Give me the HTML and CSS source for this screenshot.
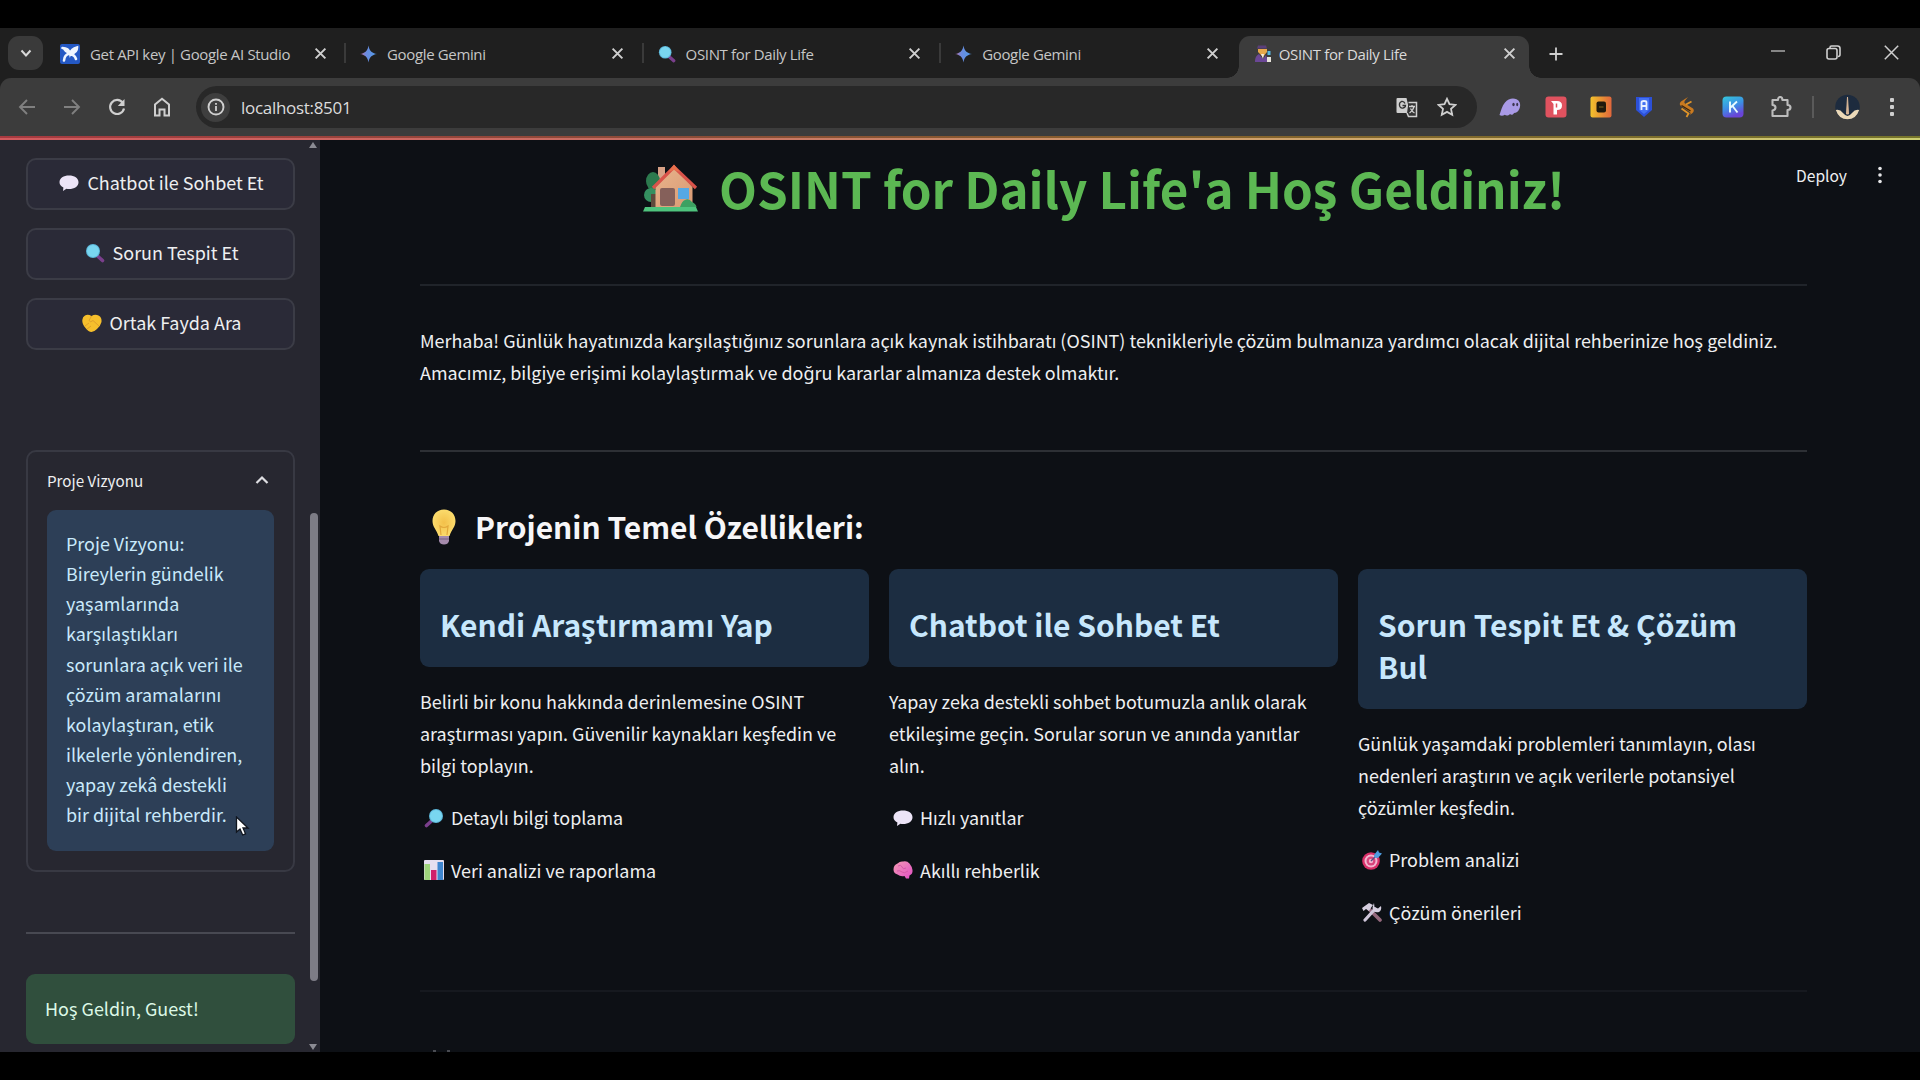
FILE: index.html
```html
<!DOCTYPE html>
<html lang="tr">
<head>
<meta charset="utf-8">
<title>OSINT for Daily Life</title>
<link rel="stylesheet" href="styles.css">
</head>
<body>
<svg width="0" height="0" class="defs">
  <defs>
    <linearGradient id="gem" x1="0" x2="1"><stop offset="0" stop-color="#c06a9a"/><stop offset=".35" stop-color="#6c8be0"/><stop offset="1" stop-color="#4f9be8"/></linearGradient>
    <linearGradient id="kg" x1="0" y1="0" x2=".4" y2="1"><stop offset="0" stop-color="#35c8dc"/><stop offset=".55" stop-color="#3c8fe4"/><stop offset="1" stop-color="#6a44d8"/></linearGradient>
    <linearGradient id="og" x1="0" x2="1"><stop offset="0" stop-color="#f2c22c"/><stop offset="1" stop-color="#e0663c"/></linearGradient>
    <linearGradient id="brain" x1="0" y1="0" x2="1" y2="1"><stop offset="0" stop-color="#f59bb4"/><stop offset="1" stop-color="#e04fc4"/></linearGradient>
    <linearGradient id="wall" x1="0" y1="0" x2="1" y2="1"><stop offset="0" stop-color="#e8b48c"/><stop offset="1" stop-color="#d99a74"/></linearGradient>
    <radialGradient id="bulb"><stop offset="0" stop-color="#f3c04a"/><stop offset="1" stop-color="#fbdb6c"/></radialGradient>
    <symbol id="x" viewBox="0 0 12 12"><path d="M1.5 1.5l9 9m0-9l-9 9" stroke="#cfcfcf" stroke-width="1.8" fill="none"/></symbol>
    <symbol id="gemini" viewBox="0 0 18 18"><path d="M9 0C9.8 5.5 12.5 8.2 18 9 12.5 9.8 9.8 12.5 9 18 8.2 12.500 5.500 9.800 0 9 5.500 8.200 8.200 5.500 9 0Z" fill="url(#gem)"/></symbol>
    <symbol id="mag" viewBox="0 0 20 20"><path d="M12.500 13l5 4.500" stroke="#7a3f8c" stroke-width="3.600" stroke-linecap="round"/><circle cx="8" cy="8" r="7" fill="#5eb9dc"/><circle cx="8" cy="8" r="6" fill="#79d6f0"/></symbol>
    <symbol id="bubble" viewBox="0 0 20 20"><path d="M10 2.500c5.400 0 9.500 2.700 9.500 6.800s-4.100 6.800-9.500 6.800c-.9 0-1.800-.1-2.600-.3L4 18l.4-3.400C2 13.400.5 11.600.5 9.300c0-4.100 4.100-6.800 9.500-6.800z" fill="#ece4f7"/></symbol>
  </defs>
</svg>
<div class="window">
  <div class="tabstrip">
    <div class="tab-menu"><svg width="12" height="12" viewBox="0 0 12 12"><path d="M1.500 3.500L6 8.500l4.500-5" fill="none" stroke="#d8d8d8" stroke-width="2"/></svg></div>
    <div class="tab t1">
      <svg class="fav" width="20" height="20" viewBox="0 0 20 20"><rect width="20" height="20" rx="2" fill="#2458c4"/><path d="M2.500 4q6 0 7.500 5.500Q11.500 5 17 3.500q0 5-6 6.500M9.500 9.500q-5 1-5.500 7M10.500 10.500q4 0 5.500 4.500" fill="none" stroke="#eef4ff" stroke-width="2.600" stroke-linecap="round"/><path d="M2.500 3.500q5 0 7.500 6-6 0-7.500-6zM17 3.500q0 5-7 6 1-5 7-6z" fill="#eef4ff"/></svg>
      <span>Get API key | Google AI Studio</span><svg class="close" width="13" height="13"><use href="#x"/></svg>
    </div>
    <div class="tab"><svg class="fav" width="17" height="18"><use href="#gemini"/></svg><span>Google Gemini</span><svg class="close" width="13" height="13"><use href="#x"/></svg></div>
    <div class="tab"><svg class="fav" width="18" height="18"><use href="#mag"/></svg><span>OSINT for Daily Life</span><svg class="close" width="13" height="13"><use href="#x"/></svg></div>
    <div class="tab last"><svg class="fav" width="17" height="18"><use href="#gemini"/></svg><span>Google Gemini</span><svg class="close" width="13" height="13"><use href="#x"/></svg></div>
    <div class="tab active">
      <svg class="fav" width="18" height="19" viewBox="0 0 18 19"><path d="M4 1.500h8l1 3H3z" fill="#5a3f78"/><path d="M4 5h9v3l-4 5-5-5z" fill="#e8a84a"/><path d="M1 18c0-5 2-7 4-8l4 5 3-4 2 7z" fill="#6b4796"/><path d="M7 10h3l-1 5z" fill="#f4e9e0"/><rect x="13.500" y="7" width="3" height="4" fill="#58b6dd"/><rect x="13" y="13" width="4" height="5" fill="#e8e4dc"/></svg>
      <span>OSINT for Daily Life</span><svg class="close" width="13" height="13"><use href="#x"/></svg>
    </div>
    <svg class="plus" width="14" height="14" viewBox="0 0 14 14"><path d="M7 0.500v13M.5 7h13" stroke="#cfcfcf" stroke-width="1.800"/></svg>
    <div class="winctl">
      <svg width="14" height="14" viewBox="0 0 14 14"><path d="M0 5h14" stroke="#a8a8a8" stroke-width="1.500"/></svg>
      <svg width="15" height="15" viewBox="0 0 15 15"><rect x="1" y="3.500" width="10" height="10.500" rx="2" fill="none" stroke="#cfcfcf" stroke-width="1.600"/><path d="M4 3V2.500Q4 1 5.500 1H11.500Q14 1 14 3.500V9.500Q14 11.500 12 11.500" fill="none" stroke="#cfcfcf" stroke-width="1.600"/></svg>
      <svg width="15" height="15" viewBox="0 0 15 15"><path d="M.8.8l13.400 13.400m0-13.400L.8 14.200" stroke="#cfcfcf" stroke-width="1.500"/></svg>
    </div>
  </div>

  <div class="toolbar">
    <div class="nav">
      <svg width="18" height="18" viewBox="0 0 18 18"><path d="M17 9H2m7-7L2 9l7 7" fill="none" stroke="#808080" stroke-width="1.900"/></svg>
      <svg width="18" height="18" viewBox="0 0 18 18"><path d="M1 9h15M9 2l7 7-7 7" fill="none" stroke="#808080" stroke-width="1.900"/></svg>
      <svg width="18" height="18" viewBox="0 0 18 18"><path d="M14.800 4.800A7 7 0 1 0 16 10.500" fill="none" stroke="#cfcfcf" stroke-width="2.200"/><path d="M16.500 1v7H9.800z" fill="#cfcfcf"/></svg>
      <svg width="18" height="20" viewBox="0 0 18 20"><path d="M2 18.500V7.500L9 1.800l7 5.700v11h-4.500v-6h-5v6z" fill="none" stroke="#cfcfcf" stroke-width="2"/></svg>
    </div>
    <div class="omnibox">
      <div class="info-badge"><svg width="18" height="18" viewBox="0 0 18 18"><circle cx="9" cy="9" r="7.500" fill="none" stroke="#d0d0d0" stroke-width="1.900"/><path d="M9 8v5M9 5v1.800" stroke="#d0d0d0" stroke-width="1.800"/></svg></div>
      <span class="url">localhost:8501</span>
      <svg class="translate" width="22" height="23" viewBox="0 0 22 21"><path d="M1.500 1h9l3.500 15h-12.500q-1 0-1-1V2q0-1 1-1z" fill="#cfcfcf"/><path d="M9 6.500Q8 4 5.500 4.500 3 5.500 3.500 8.500 4 11.500 7 11q2.500-.5 2.500-2.500H6.500" stroke="#333" fill="none" stroke-width="1.300"/><path d="M12.500 5.500h8v14h-8l-1.500-3.500" fill="#333" stroke="#cfcfcf" stroke-width="1.500"/><path d="M13 9.500h6M16 8v1.500m2 0c-.5 3-2.500 5-4.500 6.500m1-4.500c1 2 2 3.500 4 4.500" stroke="#cfcfcf" fill="none" stroke-width="1.300"/></svg>
      <svg width="20" height="20" viewBox="0 0 20 20"><path d="M10 1.800l2.500 5.400 5.900.7-4.400 4 1.200 5.900L10 14.900l-5.200 2.900L6 11.900l-4.400-4 5.900-.7z" fill="none" stroke="#cfcfcf" stroke-width="1.800"/></svg>
    </div>
    <div class="ext">
      <svg width="22" height="20" viewBox="0 0 22 20"><path d="M0.500 18C2 14 3 9 6 5.500 9 1.500 14 .8 17.500 2.200 21 3.600 22 8 20.500 11.500c-1 3-3.500 4.500-5.500 4.500-.8 2-3 2.200-4 1-1.500 1.800-4 2-5.200.8-1.500 1-3.800 1.200-5.300.2z" fill="#a99ae6"/><ellipse cx="14.500" cy="7.500" rx="1.200" ry="1.700" fill="#3c3550"/><ellipse cx="18.200" cy="7.500" rx="1" ry="1.700" fill="#3c3550"/></svg>
      <svg width="22" height="22" viewBox="0 0 22 22"><rect x=".5" y=".5" width="21" height="21" rx="3" fill="#e0525f"/><path d="M6 5h6q5 0 5 4.500T12 14v4.500H8.500V8" fill="#fff"/><path d="M11.500 7.500v4" stroke="#e0525f" stroke-width="1.500"/></svg>
      <svg width="22" height="22" viewBox="0 0 22 22"><rect x=".5" y=".5" width="21" height="21" rx="2" fill="url(#og)"/><rect x="6.500" y="5.500" width="9.500" height="11" rx="2" fill="#201a0c"/><path d="M9 11h4.500" stroke="#7d6420" stroke-width="1"/></svg>
      <svg width="16" height="20" viewBox="0 0 16 20"><path d="M0 0h16v13l-8 7-8-7z" fill="#2c50d8"/><path d="M3 1h10v12l-5 4-5-4z" fill="#4370f2"/><path d="M5.500 13V5.500Q5.500 4 8 4t2.500 1.500V13M5.500 9h5" fill="none" stroke="#e9efff" stroke-width="1.800"/></svg>
      <svg width="18" height="22" viewBox="0 0 18 22"><path d="M10 1L3 5.500Q.5 8 3 10l9 6q1.500 1.500-.5 3L14 17.500q3-2.500 1-5L7 7.500q-1.500-1.500.5-3.500z" fill="#c97a20"/><path d="M13.500 5.500L8 8.500M3.500 12.500l7 5-2 3.500" fill="none" stroke="#e09428" stroke-width="1.800"/><path d="M3.500 9.500l9 5.500" stroke="#3a240c" stroke-width="1.400"/></svg>
      <svg width="22" height="22" viewBox="0 0 22 22"><rect x=".5" y=".5" width="21" height="21" rx="4" fill="url(#kg)"/><path d="M8 5.500v11M15 5.500L8.500 11.500M10.500 10l5 6.500" fill="none" stroke="#e8fbff" stroke-width="1.900"/></svg>
      <svg width="22" height="22" viewBox="0 0 22 22"><path d="M2.500 4H8q0-3 2.200-3t2.200 3H17.500V9q3 0 3 2.500t-3 2.500v6H2.500v-5.500q3-.3 3-2.900T2.500 9z" fill="none" stroke="#bdbdbd" stroke-width="2.100" stroke-linejoin="round"/></svg>
    </div>
    <div class="vsep"></div>
    <svg class="avatar" width="25" height="26" viewBox="0 0 25 26"><circle cx="12.500" cy="13" r="12.300" fill="#1d2b3e"/><path d="M.8 16Q5 15 8 19q2 2.500 4.500 3 2.500-.5 4.500-3 3-4 7.200-3-3 9.300-11.700 9.300T.8 16z" fill="#ecd9b8"/><path d="M12.500 3l1 17h-2z" fill="#d6b596" stroke="#d6b596"/></svg>
    <svg class="dots" width="6" height="20" viewBox="0 0 6 20"><g fill="#cfcfcf"><rect x="1" y="1" width="4" height="4" rx="1"/><rect x="1" y="8" width="4" height="4" rx="1"/><rect x="1" y="15" width="4" height="4" rx="1"/></g></svg>
  </div>
  <div class="accent"></div>

  <div class="app">
    <aside class="sidebar">
      <div class="side-body">
        <div class="btn"><svg width="20" height="20"><use href="#bubble"/></svg><span>Chatbot ile Sohbet Et</span></div>
        <div class="btn"><svg width="20" height="20"><use href="#mag"/></svg><span>Sorun Tespit Et</span></div>
        <div class="btn"><svg width="20" height="20" viewBox="0 0 20 20"><path d="M3 2.500Q6 1 9.500 3 13 1 16.500 2.500 20 4 19.500 9q-1 4-4.500 7-3 3-5.500 3-3 0-6-4Q0 11 .3 7 .6 3.500 3 2.500z" fill="#f6bf2c"/><path d="M9.500 3L7 7.500q1.500 2.500 4 0l6 5.500M3 13l4-3m-2 6l4-3" fill="none" stroke="#e0a02a" stroke-width="1"/></svg><span>Ortak Fayda Ara</span></div>
        <div class="expander">
          <div class="exp-head"><span>Proje Vizyonu</span><svg width="14" height="10" viewBox="0 0 14 10"><path d="M1.500 8L7 2.500 12.500 8" fill="none" stroke="#dedee2" stroke-width="2.200"/></svg></div>
          <div class="side-info">Proje Vizyonu:<br>Bireylerin gündelik<br>yaşamlarında<br>karşılaştıkları<br>sorunlara açık veri ile<br>çözüm aramalarını<br>kolaylaştıran, etik<br>ilkelerle yönlendiren,<br>yapay zekâ destekli<br>bir dijital rehberdir.</div>
        </div>
        <div class="side-hr"></div>
        <div class="success">Hoş Geldin, Guest!</div>
      </div>
      <div class="scroll"><i class="up"></i><i class="thumb"></i><i class="down"></i></div>
    </aside>

    <main class="main">
      <h1><svg width="55" height="48" viewBox="0 0 55 48"><path d="M15 3h7v14h-7z" fill="#d7a186"/><ellipse cx="10" cy="17" rx="7" ry="9" fill="#2c7a4e"/><ellipse cx="8" cy="31" rx="7" ry="7" fill="#349060"/><path d="M8 30h5v14H8z" fill="#5e4a3c"/><path d="M12.500 22L31 3l18.500 20v21h-37z" fill="url(#wall)"/><path d="M10 24L31 3l22 21" fill="none" stroke="#d9534a" stroke-width="3.200"/><path d="M31 .5l6 7.500-6-2-6 2z" fill="#e8704c"/><rect x="17" y="24" width="15" height="18" rx="2" fill="#85605a"/><rect x="35" y="24" width="11" height="11" fill="#55a8e4"/><path d="M37 43q2-6 5-7 4-2 7 2 4 2 4.500 5z" fill="#3da162"/><path d="M2 43h51l2 4.500H0z" fill="#4fc47e"/></svg><span>OSINT for Daily Life'a Hoş Geldiniz!</span></h1>
      <div class="deploy"><span>Deploy</span><svg width="6" height="20" viewBox="0 0 6 20"><g fill="#e6e6e8"><circle cx="3" cy="3.500" r="1.800"/><circle cx="3" cy="10" r="1.800"/><circle cx="3" cy="16.500" r="1.800"/></g></svg></div>
      <hr class="r1">
      <p class="intro">Merhaba! Günlük hayatınızda karşılaştığınız sorunlara açık kaynak istihbaratı (OSINT) teknikleriyle çözüm bulmanıza yardımcı olacak dijital rehberinize hoş geldiniz.<br>Amacımız, bilgiye erişimi kolaylaştırmak ve doğru kararlar almanıza destek olmaktır.</p>
      <hr class="r2">
      <h3><svg width="24" height="36" viewBox="0 0 24 36"><path d="M12 .5c7 0 11.500 5 11.500 11.500 0 6-4 8.500-6 15H6.500C4.500 20.500.5 18 .5 12 .5 5.500 5 .5 12 .5z" fill="url(#bulb)"/><path d="M9 26l-1-9q4 3 8 0l-1 9" fill="none" stroke="#e2a83a" stroke-width="1.200"/><path d="M7 27h10v5q-1 3.500-5 3.500T7 32z" fill="#a58bac"/><path d="M7 30h10" stroke="#7d6888" stroke-width="1.200"/></svg><span>Projenin Temel Özellikleri:</span></h3>
      <div class="cards">
        <section>
          <h4>Kendi Araştırmamı Yap</h4>
          <p>Belirli bir konu hakkında derinlemesine OSINT<br>araştırması yapın. Güvenilir kaynakları keşfedin ve<br>bilgi toplayın.</p>
          <div class="item"><svg class="flip" width="20" height="20"><use href="#mag"/></svg>Detaylı bilgi toplama</div>
          <div class="item"><svg width="20" height="20" viewBox="0 0 20 20"><rect width="20" height="20" rx="1" fill="#e6dff0"/><rect x=".5" y="4" width="5.500" height="16" fill="#9fd47c"/><rect x="7" y="10" width="5.500" height="10" fill="#d01f6c"/><rect x="13.500" y="2" width="5.500" height="18" fill="#3f86cf"/></svg>Veri analizi ve raporlama</div>
        </section>
        <section>
          <h4>Chatbot ile Sohbet Et</h4>
          <p>Yapay zeka destekli sohbet botumuzla anlık olarak<br>etkileşime geçin. Sorular sorun ve anında yanıtlar<br>alın.</p>
          <div class="item"><svg width="20" height="20"><use href="#bubble"/></svg>Hızlı yanıtlar</div>
          <div class="item"><svg width="20" height="20" viewBox="0 0 20 20"><path d="M10 1.500q4-1 6.500 2T19.500 10q.5 4-3 5.500l-.5 3h-3l-1.500-2.500q-4 1-7-1.500-4-1-4-5Q.5 5 4.500 3.500 7 1 10 1.500z" fill="url(#brain)"/><path d="M5 6q3-2 4 1t4 1M4 11q3-1 5 1t6-1" fill="none" stroke="#d65aa8" stroke-width="1"/></svg>Akıllı rehberlik</div>
        </section>
        <section>
          <h4>Sorun Tespit Et &amp; Çözüm<br>Bul</h4>
          <p>Günlük yaşamdaki problemleri tanımlayın, olası<br>nedenleri araştırın ve açık verilerle potansiyel<br>çözümler keşfedin.</p>
          <div class="item"><svg width="20" height="20" viewBox="0 0 20 20"><circle cx="9" cy="11" r="8.800" fill="#d82f68"/><circle cx="9" cy="11" r="6.500" fill="#f3b6cf"/><circle cx="9" cy="11" r="4.500" fill="#d9447c"/><circle cx="9" cy="11" r="2.200" fill="#f3b6cf"/><path d="M9 11l6-6" stroke="#5a4a80" stroke-width="1.500"/><path d="M12 5l4-5 1 2.500 3 1L16 8l-3.500-.5z" fill="#4f9de0"/></svg>Problem analizi</div>
          <div class="item"><svg width="20" height="20" viewBox="0 0 20 20"><path d="M7 7l11 11" stroke="#93687c" stroke-width="3.600" stroke-linecap="round"/><path d="M3 18L13 7" stroke="#cfc6da" stroke-width="3.200" stroke-linecap="round"/><path d="M0 6l7-5 4 2-1.500 2L7 9 4 7 1.500 9z" fill="#d6cfe0"/><path d="M12 1l.5 4 3.500 1.500 3-2.500q1 4-2 6-3 1-5.500-1-2-3 .5-8z" fill="#d6cfe0"/></svg>Çözüm önerileri</div>
        </section>
      </div>
      <hr class="r3">
      <div class="peek"><i></i><i></i></div>
    </main>
  </div>
</div>
<svg class="cursor" width="15" height="21" viewBox="0 0 15 21"><path d="M1.500 1v15l3.500-3 2.700 6 2.800-1.200L8 12h5z" fill="#fff" stroke="#10151e" stroke-width="1.300"/></svg>
</body>
</html>
```
FILE: styles.css
```css
* { box-sizing: border-box; }
body {
  margin: 0; width: 1920px; height: 1080px; padding: 28px 0; background: #000; overflow: hidden;
  font: 400 17.940px/32.3px "Noto Sans CJK SC", "Noto Sans", sans-serif; color: #eeeff1;
}
svg { display: block; flex: none; }
.defs { position: absolute; }
.window { width: 1920px; height: 1024px; background: #1f1f1f; display: flex; flex-direction: column; overflow: hidden; }

.tabstrip { height: 50px; display: flex; padding-left: 8px; font: 400 15px/20px "Open Sans", sans-serif; letter-spacing: -.35px; color: #c6c6c6; }
.tab-menu { width: 35px; height: 34px; margin-top: 8px; border-radius: 11px; background: #3a3a3a; display: flex; align-items: center; justify-content: center; }
.tab { width: 297.6px; height: 51px; display: flex; align-items: center; padding: 0 20px 0 14px; position: relative; flex: none; white-space: nowrap; }
.tab span { flex: 1; margin-left: 10px; }
.tab::after { content: ""; position: absolute; right: 0; top: 15px; width: 2px; height: 20px; background: #3a3a3a; }
.tab.t1 { width: 303px; padding: 0 19px 0 17px; }
.tab.last::after, .tab.active::after { display: none; }
.tab.active { width: 290px; height: 42px; margin-top: 8px; padding: 0 13px 7px 15px; border-radius: 11px 11px 0 0; background: #3c3c3c; color: #dadada; }
.tab.active span { margin-left: 7px; }
.tab.active::before { content: ""; position: absolute; left: -12px; right: -12px; bottom: 0; height: 12px; pointer-events: none;
  background: radial-gradient(circle at 0 0, transparent 11.500px, #3c3c3c 12px) left / 12px 12px no-repeat, radial-gradient(circle at 100% 0, transparent 11.500px, #3c3c3c 12px) right / 12px 12px no-repeat; }
.plus { margin: 19px 0 0 20px; }
.winctl { margin-left: auto; padding: 17px 21px 0 0; display: flex; gap: 43px; }
.winctl svg:first-child { margin: 1px -2px 0 0; }

.toolbar { height: 58px; background: #3c3c3c; border-radius: 11px 11px 0 0; display: flex; align-items: center; padding: 0 25px 0 19px; }
.nav { display: flex; align-items: center; gap: 27px; width: 177px; }
.nav svg { position: relative; left: -1px; }
.omnibox { width: 1281px; height: 42px; border-radius: 21px; background: #282828; display: flex; align-items: center; padding: 0 20px 0 5px; }
.info-badge { width: 29px; height: 29px; border-radius: 50%; background: #3e3e3e; display: flex; align-items: center; justify-content: center; }
.url { margin-left: 11px; padding-top: 1px; flex: 1; font: 400 17px/24px "Open Sans", sans-serif; letter-spacing: -.3px; color: #dcdcdc; }
.translate { margin-right: 19px; }
.ext { display: flex; align-items: center; justify-content: space-between; width: 293px; margin-left: 22px; }
.ext svg:nth-child(2), .ext svg:nth-child(4) { margin-left: -2px; }
.ext svg:nth-child(3) { margin-left: -3px; }
.vsep { width: 2px; height: 22px; background: #5a5a5a; margin-left: 20px; }
.avatar { margin-left: 21px; }
.dots { margin-left: auto; }
.accent { height: 4px; background: linear-gradient(90deg, #d25a5e, #c87064 35%, #d09a6c 60%, #cccf72) 0 100% / 100% 2px no-repeat, linear-gradient(90deg, #a83a40, #8c4c38 35%, #86602c 60%, #77752c); }

.app { display: flex; flex: 1; min-height: 0; }
.sidebar { width: 320px; background: #272730; display: flex; }
.side-body { width: 295px; padding: 18px 0 0 26px; }
.btn { height: 52px; margin-bottom: 18px; border: 2px solid #3b3c46; border-radius: 10px; background: #2a2a37; display: flex; align-items: center; justify-content: center; gap: 8px; padding: 0 0 3px 2px; }
.expander { margin-top: 100px; height: 422px; border: 2px solid #383943; border-radius: 10px; padding: 0 19px; }
.exp-head { height: 58px; display: flex; align-items: center; justify-content: space-between; padding: 0 5px 2px 0; font-size: 15.200px; }
.side-info { height: 341px; border-radius: 9px; background: #2d3f57; padding: 18px 0 0 19px; line-height: 30.150px; color: #c9e9fb; white-space: nowrap; }
.side-hr { height: 2px; background: #484952; margin: 60px 0 40px; }
.success { height: 70px; border-radius: 9px; background: #304f3d; color: #dcf8e6; padding: 18px 19px; }
.scroll { width: 25px; display: flex; flex-direction: column; align-items: flex-start; padding: 2px 0 2px 14px; }
.up { border: 4.500px solid transparent; border-top: 0; border-bottom: 6px solid #8c8c94; }
.thumb { width: 8px; height: 468px; margin: 365px 0 0 .5px; border-radius: 4px; background: #7d7c86; }
.down { margin-top: auto; border: 4.500px solid transparent; border-bottom: 0; border-top: 6px solid #8c8c94; }

.main { flex: 1; background: #0d1015; padding: 17px 113px 0 100px; position: relative; overflow: hidden; }
h1 { margin: 0; height: 61px; display: flex; align-items: center; padding-left: 223px; gap: 21px; font-size: 49.300px; font-weight: 700; line-height: 61px; color: #5cb853; white-space: nowrap; }
.deploy { position: absolute; right: 37px; top: 19px; display: flex; align-items: center; gap: 30px; font-size: 15.600px; }
hr { border: 0; margin: 0; height: 2px; }
.r1 { background: #20242a; margin-top: 66px; }
.intro { margin: 38px 0 0; height: 65px; white-space: nowrap; }
.r2 { background: #2d3035; margin-top: 61px; }
h3 { margin: 53px 0 0; height: 43px; display: flex; align-items: center; gap: 19px; padding-left: 12px; font-size: 30px; font-weight: 600; line-height: 43px; color: #f6f6f8; }
.cards { display: flex; gap: 20px; margin-top: 21px; height: 421px; }
.cards section { flex: 1; white-space: nowrap; }
h4 { margin: 0 0 18px; padding: 34px 0 21.500px 20px; border-radius: 9px; background: #1c2d41; color: #c7e7fc; font-size: 30px; font-weight: 600; line-height: 42px; }
.cards p { margin: 0; }
.item { display: flex; align-items: center; gap: 7px; padding-left: 4px; margin-top: 20px; }
.flip { transform: scaleX(-1); }
.r3 { background: #16191f; }
.peek { display: flex; gap: 11px; padding: 58px 0 0 13px; }
.peek i { width: 3px; height: 3px; background: #4a4c52; }
.cursor { position: absolute; left: 235px; top: 816px; }
```
